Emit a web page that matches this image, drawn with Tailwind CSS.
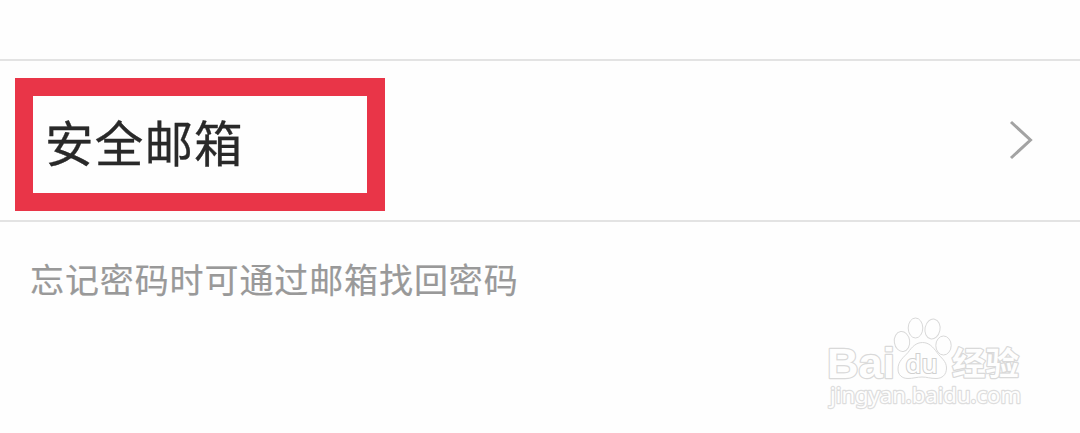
<!DOCTYPE html>
<html lang="zh-CN">
<head>
<meta charset="utf-8">
<title>安全邮箱</title>
<script src="https://cdn.jsdelivr.net/npm/@tailwindcss/browser@4"></script>
</head>
<body class="relative flex h-[433px] w-[1080px] flex-col overflow-hidden bg-[#fefefe] font-['Noto_Sans_CJK_SC',sans-serif]">
  <header class="h-[59px] shrink-0"></header>
  <main class="flex flex-col">
    <section class="flex h-[163px] items-start justify-between border-y-2 border-[#e3e3e3] pt-[17px] pr-[47px] pl-[15px]">
      <div class="flex h-[133px] w-[370px] items-center border-[18px] border-[#e93548] bg-[#fefefe] pl-[12px]">
        <h1 class="-mt-[7px] text-[48.500px] leading-none tracking-[1.200px] whitespace-nowrap text-[#292929] [-webkit-text-stroke:0.300px_#292929]">安全邮箱</h1>
      </div>
      <svg class="mt-[42px] h-[40px] w-[24px]" viewBox="0 0 24 40" fill="none" stroke="#a3a3a3" stroke-width="3"><path d="M2 2 21.500 20 2 38"/></svg>
    </section>
    <p class="pt-[38px] pl-[30px] text-[34px] leading-[38px] tracking-[0.900px] whitespace-nowrap text-[#999999] [-webkit-text-stroke:0.200px_#999999]">忘记密码时可通过邮箱找回密码</p>
  </main>
  <svg class="absolute top-[300px] left-[810px] h-[130px] w-[230px]" viewBox="0 0 230 130" fill="#fefefe" stroke="#d9d9d9" stroke-width="1">
    <g paint-order="stroke" stroke-width="2.400" stroke-linejoin="round">
      <text x="17" y="77.500" font-family="Liberation Sans, sans-serif" font-weight="700" font-size="43" textLength="68" lengthAdjust="spacingAndGlyphs">Bai</text>
      <text x="142" y="74.500" font-family="Noto Sans CJK SC, sans-serif" font-weight="700" font-size="32" textLength="67" lengthAdjust="spacingAndGlyphs">经验</text>
      <text x="20" y="103" font-family="Noto Sans, sans-serif" font-size="22" stroke="#dddddd" textLength="191" lengthAdjust="spacingAndGlyphs">jingyan.baidu.com</text>
    </g>
    <ellipse cx="92" cy="41.500" rx="7.700" ry="10" transform="rotate(-8 92 41.500)"/>
    <ellipse cx="105.500" cy="28" rx="7.300" ry="10"/>
    <ellipse cx="122.500" cy="29" rx="7.500" ry="10" transform="rotate(12 122.500 29)"/>
    <ellipse cx="133.500" cy="45.500" rx="7.700" ry="9.500"/>
    <path d="M112.500 42.500C106 42.500 102 47 98 52.500C94 57 88 61 88 69C88 75 92 78.500 98 78.500C103 78.500 107 77 112 77C117 77 120 78.500 126 78.500C132 78.500 136.500 75 136.500 68C136.500 61 131 58 127 52.500C123 47 119 42.500 112.500 42.500Z"/>
    <text x="95.500" y="73" paint-order="stroke" font-family="Noto Sans, sans-serif" font-weight="500" font-size="25" stroke="#d0d0d0" stroke-width="2" textLength="32" lengthAdjust="spacingAndGlyphs">du</text>
  </svg>
</body>
</html>
